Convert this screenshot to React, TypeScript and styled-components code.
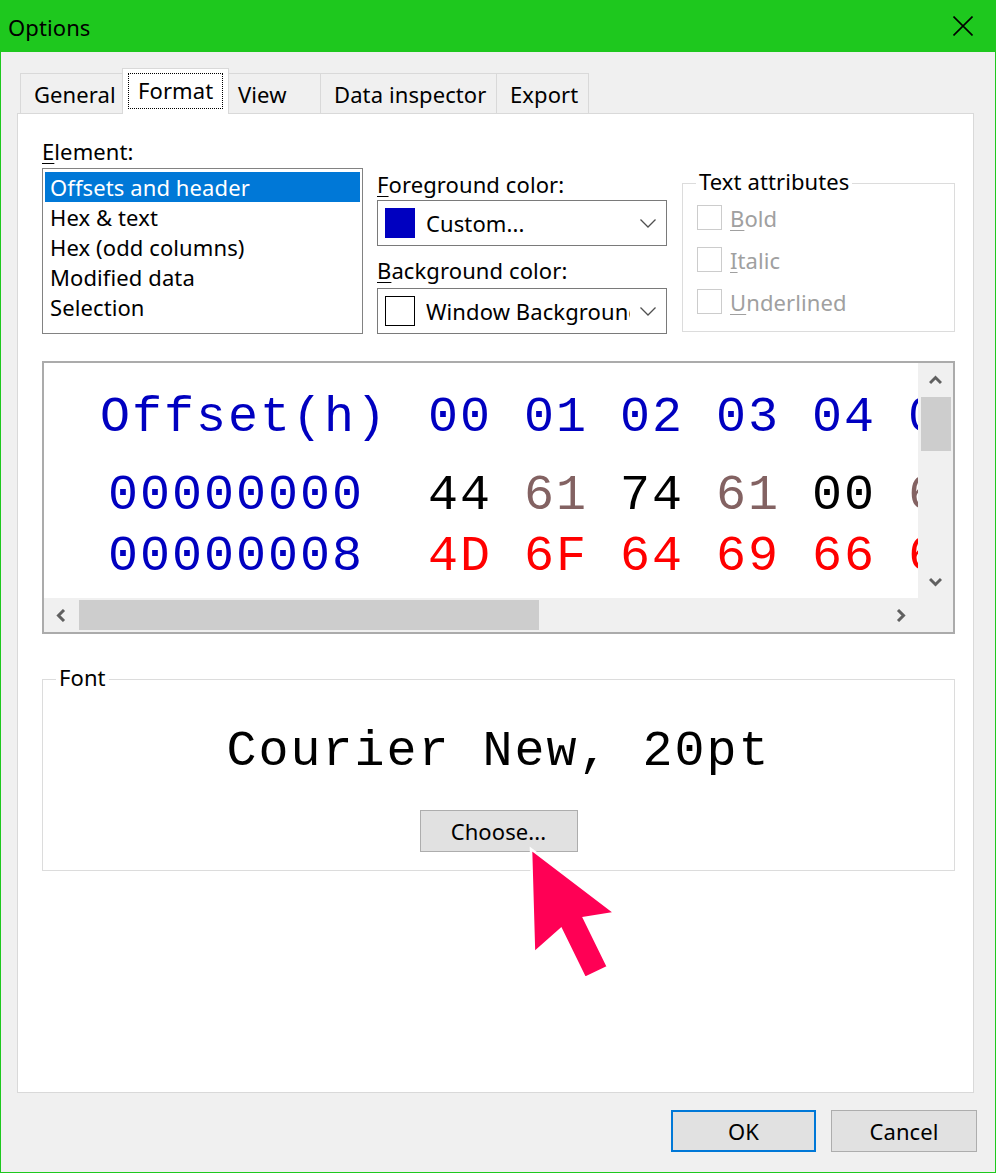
import React from "react";
import styled, { createGlobalStyle } from "styled-components";

const UI = `"Noto Sans", "Open Sans", sans-serif`;
const MONO = `"Liberation Mono", "Courier New", monospace`;

const GlobalStyle = createGlobalStyle`
  html, body { margin: 0; padding: 0; background: #ffffff; }
  * { box-sizing: border-box; }
`;

const Window = styled.div`
  position: relative;
  width: 996px;
  height: 1173px;
  display: flex;
  flex-direction: column;
  border: 1px solid #1ec81e;
  border-top: none;
  background: #f0f0f0;
  font-family: ${UI};
  font-size: 22px;
  letter-spacing: 0.1px;
  color: #000;
  overflow: hidden;
`;

const TitleBar = styled.div`
  flex: none;
  height: 52px;
  background: #1ec81e;
  display: flex;
  align-items: center;
  justify-content: space-between;
  margin: 0 -1px;
  padding-left: 8px;
  padding-right: 23px;
`;

const Title = styled.div`
  font-size: 22px;
  line-height: 28px;
  padding-top: 1px;
`;

const Body = styled.div`
  flex: 1;
  display: flex;
  flex-direction: column;
  padding: 16px 0 0 16px;
`;

const TabStrip = styled.div`
  display: flex;
  align-items: flex-end;
  height: 45px;
  padding-left: 4px;
`;

const Tab = styled.div<{ $w: number; $active?: boolean; $pad?: number }>`
  position: relative;
  z-index: ${(p) => (p.$active ? 2 : 1)};
  width: ${(p) => p.$w}px;
  height: ${(p) => (p.$active ? 46 : 40)}px;
  margin-bottom: ${(p) => (p.$active ? -1 : 0)}px;
  margin-left: -1px;
  border: 1px solid #d9d9d9;
  border-bottom: none;
  background: ${(p) => (p.$active ? "#ffffff" : "#f0f0f0")};
  display: flex;
  align-items: ${(p) => (p.$active ? "flex-start" : "center")};
  padding: ${(p) => (p.$active ? "4px 5px 0 5px" : `0 0 0 ${p.$pad ?? 13}px`)};
  white-space: nowrap;
  line-height: 28px;
`;

const Focus = styled.div`
  width: 100%;
  height: 36px;
  border: 1px dotted #000;
  display: flex;
  align-items: center;
  padding-left: 9px;
  padding-bottom: 3px;
`;

const Panel = styled.div`
  position: relative;
  z-index: 1;
  width: 957px;
  height: 980px;
  background: #ffffff;
  border: 1px solid #d9d9d9;
  padding: 23px 18px 0 24px;
  display: flex;
  flex-direction: column;
`;

const TopRow = styled.div`
  display: flex;
  align-items: flex-start;
`;

const Column = styled.div<{ $w: number; $top?: number; $ml?: number }>`
  width: ${(p) => p.$w}px;
  margin-top: ${(p) => p.$top ?? 0}px;
  margin-left: ${(p) => p.$ml ?? 0}px;
  display: flex;
  flex-direction: column;
`;

const Label = styled.div<{ $mt?: number }>`
  line-height: 28px;
  height: 28px;
  margin-top: ${(p) => p.$mt ?? 0}px;
  white-space: nowrap;
`;

const Key = styled.span`
  text-decoration: underline;
  text-underline-offset: 3px;
  text-decoration-thickness: 1px;
`;

const ListBox = styled.div`
  margin-top: 3px;
  height: 166px;
  border: 1px solid #828282;
  padding: 3px 2px;
  display: flex;
  flex-direction: column;
`;

const ListItem = styled.div<{ $selected?: boolean }>`
  height: 30px;
  line-height: 30px;
  padding-left: 5px;
  white-space: nowrap;
  background: ${(p) => (p.$selected ? "#0078d7" : "transparent")};
  color: ${(p) => (p.$selected ? "#ffffff" : "#000000")};
`;

const Combo = styled.div<{ $mt: number }>`
  margin-top: ${(p) => p.$mt}px;
  height: 46px;
  border: 1px solid #7a7a7a;
  background: #ffffff;
  display: flex;
  align-items: center;
  padding-left: 7px;
`;

const Swatch = styled.div<{ $fill: string; $edge: string }>`
  flex: none;
  width: 30px;
  height: 30px;
  background: ${(p) => p.$fill};
  border: 1px solid ${(p) => p.$edge};
`;

const ComboText = styled.div`
  flex: 1;
  margin-left: 11px;
  white-space: nowrap;
  overflow: hidden;
  line-height: 28px;
`;

const ComboArrow = styled.div`
  flex: none;
  width: 36px;
  height: 44px;
  display: flex;
  align-items: center;
  justify-content: center;
`;

const GroupBox = styled.div<{ $h: number }>`
  position: relative;
  height: ${(p) => p.$h}px;
  border: 1px solid #dcdcdc;
`;

const GroupLabel = styled.div`
  position: absolute;
  top: -17px;
  left: 13px;
  padding: 0 3px;
  background: #ffffff;
  line-height: 28px;
  white-space: nowrap;
`;

const CheckList = styled.div`
  display: flex;
  flex-direction: column;
  gap: 17px;
  padding: 21px 0 0 14px;
`;

const CheckRow = styled.div`
  display: flex;
  align-items: center;
  height: 25px;
  color: #a0a0a0;
  line-height: 28px;
`;

const CheckBox = styled.div`
  width: 25px;
  height: 25px;
  border: 1px solid #cccccc;
  background: #ffffff;
  margin-right: 8px;
`;

const HexBox = styled.div`
  margin-top: 27px;
  width: 913px;
  height: 273px;
  border: 2px solid #ababab;
  display: grid;
  grid-template-columns: 1fr 35px;
  grid-template-rows: 1fr 34px;
  background: #f0f0f0;
`;

const HexView = styled.div`
  background: #ffffff;
  overflow: hidden;
  padding-top: 24px;
  font-family: ${MONO};
  font-size: 50px;
  letter-spacing: 2px;
  line-height: 61px;
`;

const HexRow = styled.div<{ $mb?: number }>`
  display: flex;
  width: max-content;
  white-space: pre;
  margin-bottom: ${(p) => p.$mb ?? 0}px;
`;

const OffsetCell = styled.div<{ $pad: number; $color: string }>`
  flex: none;
  width: 384px;
  padding-left: ${(p) => p.$pad}px;
  color: ${(p) => p.$color};
`;

const ByteCell = styled.div<{ $color: string }>`
  flex: none;
  width: 96px;
  color: ${(p) => p.$color};
`;

const VScroll = styled.div`
  display: flex;
  flex-direction: column;
  align-items: center;
  background: #f0f0f0;
`;

const HScroll = styled.div`
  display: flex;
  align-items: center;
  background: #f0f0f0;
`;

const ArrowBtn = styled.div`
  flex: none;
  width: 35px;
  height: 34px;
  display: flex;
  align-items: center;
  justify-content: center;
`;

const Track = styled.div<{ $vertical?: boolean }>`
  flex: 1;
  display: flex;
  flex-direction: ${(p) => (p.$vertical ? "column" : "row")};
  align-items: center;
`;

const Thumb = styled.div<{ $vertical?: boolean; $len: number }>`
  flex: none;
  background: #cdcdcd;
  width: ${(p) => (p.$vertical ? 30 : p.$len)}px;
  height: ${(p) => (p.$vertical ? p.$len : 30)}px;
`;

const Corner = styled.div`
  background: #f0f0f0;
`;

const FontGroupInner = styled.div`
  display: flex;
  flex-direction: column;
  align-items: center;
  padding-top: 42px;
`;

const FontSample = styled.div`
  font-family: ${MONO};
  font-size: 50px;
  letter-spacing: 2px;
  line-height: 60px;
  white-space: pre;
`;

const Button = styled.div<{ $w: number; $default?: boolean; $mt?: number }>`
  width: ${(p) => p.$w}px;
  height: 42px;
  margin-top: ${(p) => p.$mt ?? 0}px;
  background: #e1e1e1;
  border: ${(p) => (p.$default ? "2px solid #0078d7" : "1px solid #adadad")};
  display: flex;
  align-items: center;
  justify-content: center;
  line-height: 28px;
  white-space: nowrap;
`;

const Footer = styled.div`
  flex: 1;
  display: flex;
  justify-content: flex-end;
  align-items: flex-start;
  gap: 15px;
  padding: 17px 18px 0 0;
`;

const Pointer = styled.svg`
  position: absolute;
  left: 519px;
  top: 840px;
  z-index: 5;
`;

const Chevron = ({ dir }: { dir: "up" | "down" | "left" | "right" }) => {
  const pts = {
    up: "1,9 6.5,3.5 12,9",
    down: "1,4 6.5,9.5 12,4",
    left: "9,1 3.5,6.5 9,12",
    right: "4,1 9.5,6.5 4,12",
  }[dir];
  return (
    <svg width={13} height={13} viewBox="0 0 13 13">
      <polyline points={pts} fill="none" stroke="#606060" strokeWidth={3} />
    </svg>
  );
};

const DropChevron = () => (
  <svg width={16} height={9} viewBox="0 0 16 9">
    <polyline points="0.5,0.5 8,8 15.5,0.5" fill="none" stroke="#505050" strokeWidth={1.3} />
  </svg>
);

const header = ["00", "01", "02", "03", "04", "05"];
const row1: [string, string][] = [
  ["44", "#000000"],
  ["61", "#836262"],
  ["74", "#000000"],
  ["61", "#836262"],
  ["00", "#000000"],
  ["65", "#836262"],
];
const row2 = ["4D", "6F", "64", "69", "66", "69"];

const BLUE = "#0000c0";

export default function App() {
  return (
    <>
      <GlobalStyle />
      <Window>
        <TitleBar>
          <Title>Options</Title>
          <svg width={20} height={20} viewBox="0 0 20 20">
            <path d="M0.5 0.5 L19.5 19.5 M19.5 0.5 L0.5 19.5" stroke="#000" strokeWidth={1.6} />
          </svg>
        </TitleBar>
        <Body>
          <TabStrip>
            <Tab $w={103}>General</Tab>
            <Tab $w={107} $active>
              <Focus>Format</Focus>
            </Tab>
            <Tab $w={93} $pad={9}>View</Tab>
            <Tab $w={177}>Data inspector</Tab>
            <Tab $w={93}>Export</Tab>
          </TabStrip>
          <Panel>
            <TopRow>
              <Column $w={321}>
                <Label>
                  <Key>E</Key>lement:
                </Label>
                <ListBox>
                  <ListItem $selected>Offsets and header</ListItem>
                  <ListItem>Hex &amp; text</ListItem>
                  <ListItem>Hex (odd columns)</ListItem>
                  <ListItem>Modified data</ListItem>
                  <ListItem>Selection</ListItem>
                </ListBox>
              </Column>
              <Column $w={290} $ml={14} $top={33}>
                <Label>
                  <Key>F</Key>oreground color:
                </Label>
                <Combo $mt={2}>
                  <Swatch $fill={BLUE} $edge={BLUE} />
                  <ComboText>Custom...</ComboText>
                  <ComboArrow>
                    <DropChevron />
                  </ComboArrow>
                </Combo>
                <Label $mt={10}>
                  <Key>B</Key>ackground color:
                </Label>
                <Combo $mt={4}>
                  <Swatch $fill="#ffffff" $edge="#000000" />
                  <ComboText>Window Background</ComboText>
                  <ComboArrow>
                    <DropChevron />
                  </ComboArrow>
                </Combo>
              </Column>
              <Column $w={273} $ml={15} $top={46}>
                <GroupBox $h={149}>
                  <GroupLabel>Text attributes</GroupLabel>
                  <CheckList>
                    <CheckRow>
                      <CheckBox />
                      <span>
                        <Key>B</Key>old
                      </span>
                    </CheckRow>
                    <CheckRow>
                      <CheckBox />
                      <span>
                        <Key>I</Key>talic
                      </span>
                    </CheckRow>
                    <CheckRow>
                      <CheckBox />
                      <span>
                        <Key>U</Key>nderlined
                      </span>
                    </CheckRow>
                  </CheckList>
                </GroupBox>
              </Column>
            </TopRow>

            <HexBox>
              <HexView>
                <HexRow $mb={17}>
                  <OffsetCell $pad={56} $color={BLUE}>Offset(h)</OffsetCell>
                  {header.map((h) => (
                    <ByteCell key={h} $color={BLUE}>{h}</ByteCell>
                  ))}
                </HexRow>
                <HexRow>
                  <OffsetCell $pad={64} $color={BLUE}>00000000</OffsetCell>
                  {row1.map(([b, c], i) => (
                    <ByteCell key={i} $color={c}>{b}</ByteCell>
                  ))}
                </HexRow>
                <HexRow>
                  <OffsetCell $pad={64} $color={BLUE}>00000008</OffsetCell>
                  {row2.map((b, i) => (
                    <ByteCell key={i} $color="#ff0000">{b}</ByteCell>
                  ))}
                </HexRow>
              </HexView>
              <VScroll>
                <ArrowBtn>
                  <Chevron dir="up" />
                </ArrowBtn>
                <Track $vertical>
                  <Thumb $vertical $len={54} />
                </Track>
                <ArrowBtn>
                  <Chevron dir="down" />
                </ArrowBtn>
              </VScroll>
              <HScroll>
                <ArrowBtn>
                  <Chevron dir="left" />
                </ArrowBtn>
                <Track>
                  <Thumb $len={460} />
                </Track>
                <ArrowBtn>
                  <Chevron dir="right" />
                </ArrowBtn>
              </HScroll>
              <Corner />
            </HexBox>

            <Column $w={913} $top={45}>
              <GroupBox $h={192}>
                <GroupLabel>Font</GroupLabel>
                <FontGroupInner>
                  <FontSample>Courier New, 20pt</FontSample>
                  <Button $w={158} $mt={28}>Choose...</Button>
                </FontGroupInner>
              </GroupBox>
            </Column>
          </Panel>
          <Footer>
            <Button $w={145} $default>OK</Button>
            <Button $w={146}>Cancel</Button>
          </Footer>
        </Body>
        <Pointer width={110} height={150} viewBox="0 0 110 150">
          <polygon
            points="11,9 14,113 41,89 65,138 88,127 64,78 95,73"
            fill="#ff0055"
            stroke="#ffffff"
            strokeWidth={2.5}
            strokeLinejoin="miter"
          />
        </Pointer>
      </Window>
    </>
  );
}
